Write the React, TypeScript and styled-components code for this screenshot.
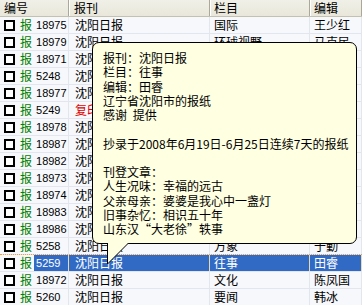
import React from 'react';
import styled, { createGlobalStyle, css } from 'styled-components';

const GlobalStyle = createGlobalStyle`
  html, body { margin: 0; padding: 0; background: #ffffff; overflow: hidden; }
  #root { width: 362px; height: 305px; }
`;

const COLS = '69px 141px 100px 1fr';

const Frame = styled.div`
  position: relative;
  width: 362px;
  height: 305px;
  overflow: hidden;
  background: #f7f8fc;
  font-family: "Noto Sans CJK SC", sans-serif;
  font-size: 12px;
  color: #000;
`;

const Header = styled.div`
  display: grid;
  grid-template-columns: ${COLS};
  height: 17px;
  box-sizing: border-box;
  background: linear-gradient(#f1f0e8, #e9e7da);
  border-bottom: 1px solid #c4c1b1;
`;

const HeadCell = styled.div<{ $pad: number }>`
  display: flex;
  align-items: center;
  padding-left: ${p => p.$pad}px;
  line-height: 16px;
  border-right: 1px solid #aca899;
  box-shadow: inset 1px 0 0 #ffffff;
  overflow: hidden;
  white-space: nowrap;
  &:first-child { box-shadow: none; }
`;

const Row = styled.div<{ $selected?: boolean }>`
  display: grid;
  grid-template-columns: ${COLS};
  height: 17px;
  box-sizing: border-box;
  border-bottom: 1px solid #e3e6ee;
  ${p => p.$selected && css`
    border-top: 1px dotted #f0a040;
    margin-top: -1px;
    height: 18px;
  `}
`;

const Cell = styled.div<{ $pad: number; $selected?: boolean; $red?: boolean }>`
  display: flex;
  align-items: center;
  padding-left: ${p => p.$pad}px;
  line-height: 16px;
  border-right: 1px solid ${p => (p.$selected ? '#e9d8b0' : '#e3e6ee')};
  overflow: hidden;
  white-space: nowrap;
  background: ${p => (p.$selected ? '#316ac5' : 'transparent')};
  color: ${p => (p.$red ? '#e00000' : p.$selected ? '#ffffff' : '#000000')};
`;

const IdCell = styled.div<{ $selected?: boolean }>`
  display: flex;
  align-items: center;
  padding-left: 4px;
  border-right: 1px solid ${p => (p.$selected ? '#e9d8b0' : '#e3e6ee')};
  overflow: hidden;
  white-space: nowrap;
`;

const Check = styled.span`
  width: 11px;
  height: 11px;
  box-sizing: border-box;
  border: 2px solid #000;
  background: #ffffff;
  flex: none;
`;

const Mark = styled.span`
  color: #008000;
  margin-left: 5px;
  line-height: 16px;
`;

const Num = styled.span<{ $selected?: boolean }>`
  font-family: "Liberation Sans", sans-serif;
  font-size: 11px;
  line-height: 16px;
  align-self: stretch;
  display: flex;
  align-items: center;
  margin-left: 2px;
  padding-left: 2px;
  flex: 1;
  background: ${p => (p.$selected ? '#316ac5' : 'transparent')};
  color: ${p => (p.$selected ? '#ffffff' : '#000000')};
`;

const Balloon = styled.div`
  position: absolute;
  left: 92px;
  top: 42px;
  width: 265px;
  height: 202px;
  box-sizing: border-box;
  background: #ffffe1;
  border: 1px solid #000;
  border-radius: 7px;
  padding: 8px 0 0 10px;
  font-family: "Noto Sans CJK SC", sans-serif;
  font-size: 12px;
  line-height: 14.25px;
  color: #000;
  white-space: pre;
  word-spacing: 3px;
`;

const Tail = styled.svg`
  position: absolute;
  left: 14px;
  top: 200px;
  overflow: visible;
`;

type RowData = {
  id: string;
  paper: string;
  column: string;
  editor: string;
  red?: boolean;
  selected?: boolean;
};

const rows: RowData[] = [
  { id: '18975', paper: '沈阳日报', column: '国际', editor: '王少红' },
  { id: '18979', paper: '沈阳日报', column: '环球视野', editor: '马克民' },
  { id: '18971', paper: '沈阳日报', column: '文化', editor: '陈凤国' },
  { id: '5248', paper: '沈阳日报', column: '要闻', editor: '韩冰' },
  { id: '18977', paper: '沈阳日报', column: '国际', editor: '王少红' },
  { id: '5249', paper: '复印报刊', column: '往事', editor: '田睿', red: true },
  { id: '18978', paper: '沈阳日报', column: '国际', editor: '王少红' },
  { id: '18987', paper: '沈阳日报', column: '文化', editor: '陈凤国' },
  { id: '18982', paper: '沈阳日报', column: '要闻', editor: '韩冰' },
  { id: '18973', paper: '沈阳日报', column: '国际', editor: '王少红' },
  { id: '18974', paper: '沈阳日报', column: '文化', editor: '陈凤国' },
  { id: '18983', paper: '沈阳日报', column: '要闻', editor: '韩冰' },
  { id: '18986', paper: '沈阳日报', column: '国际', editor: '王少红' },
  { id: '5258', paper: '沈阳日报', column: '万象', editor: '于勤' },
  { id: '5259', paper: '沈阳日报', column: '往事', editor: '田睿', selected: true },
  { id: '18972', paper: '沈阳日报', column: '文化', editor: '陈凤国' },
  { id: '5260', paper: '沈阳日报', column: '要闻', editor: '韩冰' },
];

const tip = [
  '报刊：沈阳日报',
  '栏目：往事',
  '编辑：田睿',
  '辽宁省沈阳市的报纸',
  '感谢 提供',
  '',
  '抄录于2008年6月19日-6月25日连续7天的报纸',
  '',
  '刊登文章：',
  '人生况味：幸福的远古',
  '父亲母亲：婆婆是我心中一盏灯',
  '旧事杂忆：相识五十年',
  '山东汉“大老徐”轶事',
].join('\n');

export default function App() {
  return (
    <Frame>
      <GlobalStyle />
      <Header>
        <HeadCell $pad={4}>编号</HeadCell>
        <HeadCell $pad={5}>报刊</HeadCell>
        <HeadCell $pad={4}>栏目</HeadCell>
        <HeadCell $pad={4}>编辑</HeadCell>
      </Header>
      {rows.map(r => (
        <Row key={r.id} $selected={r.selected}>
          <IdCell $selected={r.selected}>
            <Check />
            <Mark>报</Mark>
            <Num $selected={r.selected}>{r.id}</Num>
          </IdCell>
          <Cell $pad={6} $selected={r.selected} $red={r.red}>{r.paper}</Cell>
          <Cell $pad={4} $selected={r.selected}>{r.column}</Cell>
          <Cell $pad={4} $selected={r.selected}>{r.editor}</Cell>
        </Row>
      ))}
      <Balloon>
        {tip}
        <Tail width="22" height="22" viewBox="0 0 22 22">
          <polygon points="0,0 21.5,0 0.5,21" fill="#ffffe1" />
          <path d="M0.5,0 L0.5,21 L21.5,0" fill="none" stroke="#000" strokeWidth="1" />
        </Tail>
      </Balloon>
    </Frame>
  );
}
